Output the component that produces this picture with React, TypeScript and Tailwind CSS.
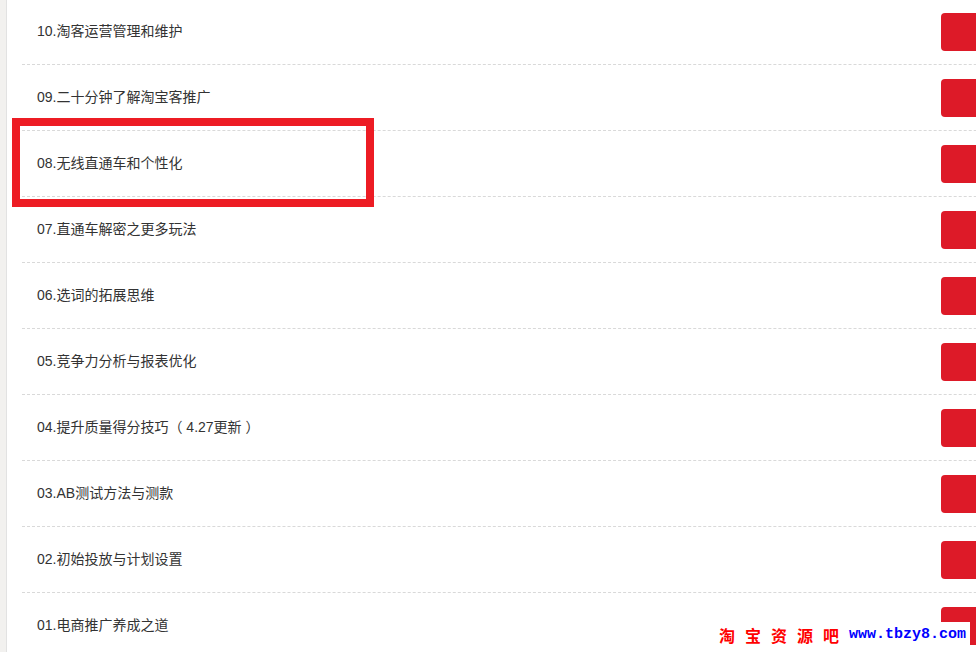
const lessons = [
  "10.淘客运营管理和维护",
  "09.二十分钟了解淘宝客推广",
  "08.无线直通车和个性化",
  "07.直通车解密之更多玩法",
  "06.选词的拓展思维",
  "05.竞争力分析与报表优化",
  "04.提升质量得分技巧（ 4.27更新 ）",
  "03.AB测试方法与测款",
  "02.初始投放与计划设置",
  "01.电商推广养成之道",
];

const App = () => {
  return (
    <div
      lang="zh-CN"
      className="relative flex h-[652px] w-[976px] overflow-hidden bg-white font-['Liberation_Sans','Noto_Sans_CJK_SC',sans-serif]"
    >
      {/* 左侧灰条 */}
      <div className="w-[7px] shrink-0 border-r border-[#e2e2e2] bg-[#f2f1ef]" />

      {/* 课程列表 */}
      <div className="flex-1 pl-[15px]">
        <ul className="-mt-[1px] w-[1100px]">
          {lessons.map((title) => (
            <li
              key={title}
              className="flex h-[66px] items-center justify-between border-b border-dashed border-[#d9d9d9] pl-[15px]"
            >
              <span className="text-[14px] text-[#333] [font-synthesis:none]">{title}</span>
              <button className="mr-[111px] h-[38px] w-[70px] rounded-[4px] bg-[#dd1a28]" />
            </li>
          ))}
        </ul>
      </div>

      {/* 标注框 */}
      <div className="absolute left-[12px] top-[118px] h-[89px] w-[362px] border-[8px] border-[#ed1c24]" />

      {/* 水印 */}
      <div className="absolute left-[710px] top-[622px] flex h-[30px] w-[260px] items-start bg-white pl-[9px] pt-[2px]">
        <span className="flex gap-[10px] font-['Noto_Sans_CJK_SC',serif] text-[16px] font-bold leading-[22px] text-[#ff0000]">
          <span>淘</span>
          <span>宝</span>
          <span>资</span>
          <span>源</span>
          <span>吧</span>
        </span>
        <span className="ml-[10px] font-['Liberation_Mono',monospace] text-[15px] font-bold leading-[22px] text-[#0000ff]">
          www.tbzy8.com
        </span>
      </div>
    </div>
  );
};

export default App;
